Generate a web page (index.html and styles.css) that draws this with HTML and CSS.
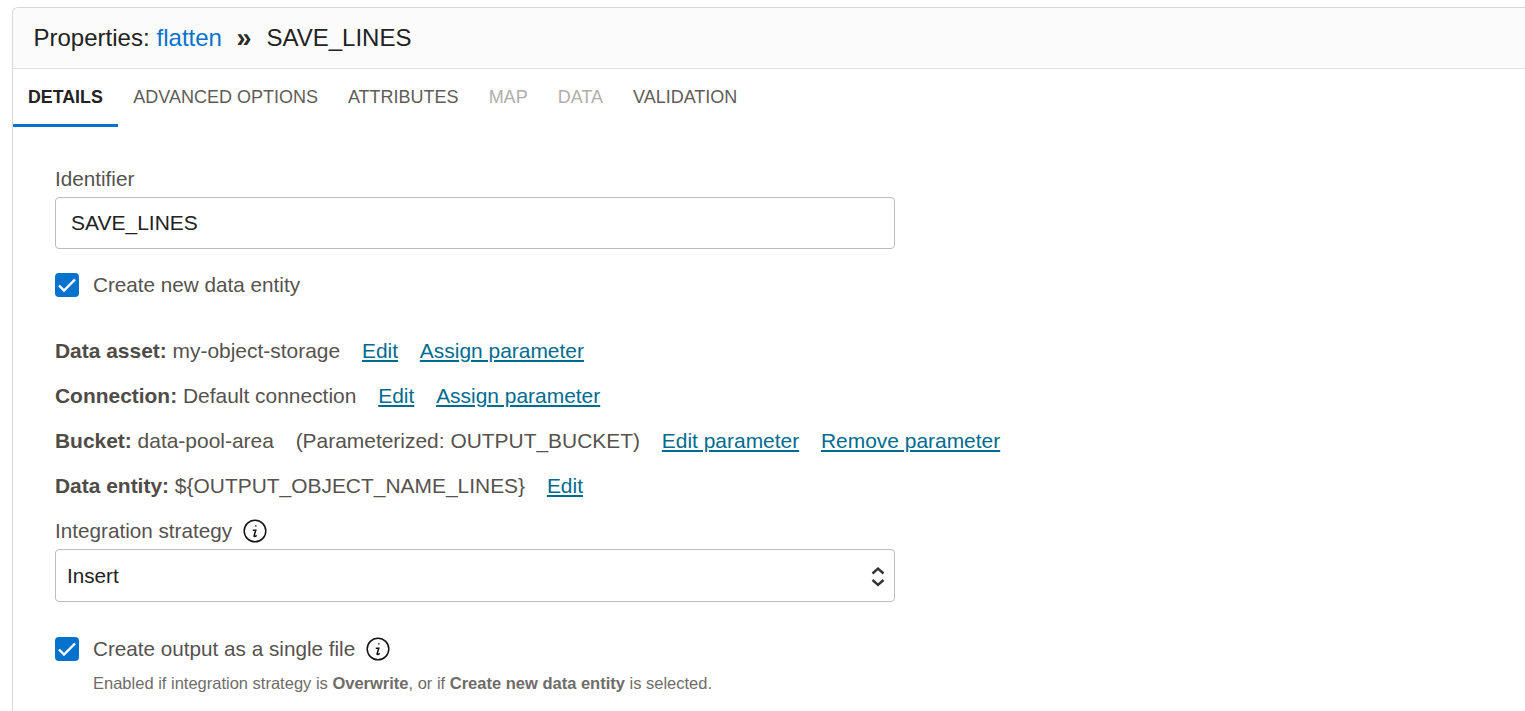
FILE: index.html
```html
<!DOCTYPE html>
<html lang="en">
<head>
    <meta charset="UTF-8">
    <title>Properties: flatten</title>
    <link rel="stylesheet" href="styles.css">
</head>
<body>
    <div class="panel">
        <div class="panel-header">
            <span>Properties:</span>
            <a href="#" class="crumb-link">flatten</a>
            <span class="crumb-sep">&raquo;</span>
            <span>SAVE_LINES</span>
        </div>

        <div class="tabs">
            <a href="#" class="tab active">DETAILS</a>
            <a href="#" class="tab">ADVANCED OPTIONS</a>
            <a href="#" class="tab">ATTRIBUTES</a>
            <a href="#" class="tab disabled">MAP</a>
            <a href="#" class="tab disabled">DATA</a>
            <a href="#" class="tab">VALIDATION</a>
        </div>

        <div class="form">
            <label class="field-label">Identifier</label>
            <input type="text" class="text-input" value="SAVE_LINES">

            <div class="check-row first-check">
                <span class="checkbox">
                    <svg viewBox="0 0 24 24"><path d="M4 12.500l5 5L20 6.500"/></svg>
                </span>
                <span>Create new data entity</span>
            </div>

            <div class="info-row first-info">
                <b>Data asset:</b> my-object-storage
                <a href="#" class="link">Edit</a>
                <a href="#" class="link">Assign parameter</a>
            </div>
            <div class="info-row">
                <b>Connection:</b> Default connection
                <a href="#" class="link">Edit</a>
                <a href="#" class="link">Assign parameter</a>
            </div>
            <div class="info-row">
                <b>Bucket:</b> data-pool-area
                <span class="param-note">(Parameterized: OUTPUT_BUCKET)</span>
                <a href="#" class="link">Edit parameter</a>
                <a href="#" class="link">Remove parameter</a>
            </div>
            <div class="info-row">
                <b>Data entity:</b> ${OUTPUT_OBJECT_NAME_LINES}
                <a href="#" class="link">Edit</a>
            </div>

            <div class="field-label strategy-label">
                <span>Integration strategy</span>
                <svg class="info-icon" viewBox="0 0 24 24">
                    <circle cx="12" cy="12" r="10.800"/>
                    <path d="M12.800 6.200v1.200M9.800 11.200h3l-1.700 5.600c-.2.900.8 1.200 2.600-.4"/>
                </svg>
            </div>
            <div class="select-box">
                <span>Insert</span>
                <svg class="select-arrows" viewBox="0 0 16 24">
                    <path d="M2.500 9.500L8 4.500l5.500 5M2.500 16L8 21l5.500-5"/>
                </svg>
            </div>

            <div class="check-row second-check">
                <span class="checkbox">
                    <svg viewBox="0 0 24 24"><path d="M4 12.500l5 5L20 6.500"/></svg>
                </span>
                <span>Create output as a single file</span>
                <svg class="info-icon" viewBox="0 0 24 24">
                    <circle cx="12" cy="12" r="10.800"/>
                    <path d="M12.800 6.200v1.200M9.800 11.200h3l-1.700 5.600c-.2.900.8 1.200 2.600-.4"/>
                </svg>
            </div>
            <div class="help-text">Enabled if integration strategy is <b>Overwrite</b>, or if <b>Create new data entity</b> is selected.</div>
        </div>
    </div>
</body>
</html>
```

FILE: styles.css
```css
:root {
    --primary-color: #0572ce;
    --link-color: #006b8f;
    --text-color: #161513;
    --label-color: #56524e;
    --border-color: #d8d8d8;
}
html, body {
    height: 100%;
}
body {
    margin: 0;
    overflow: hidden;
    background-color: #fff;
    font-family: 'Liberation Sans', Arial, sans-serif;
    font-size: 20.7px;
    color: var(--label-color);
}
.panel {
    margin: 7px 0 0 12px;
    height: 720px;
    border: 1px solid var(--border-color);
    border-right: none;
    border-radius: 6px 0 0 0;
    box-sizing: border-box;
}
.panel-header {
    display: flex;
    align-items: center;
    height: 60px;
    padding-left: 20.500px;
    background-color: #fbfbfb;
    border-bottom: 1px solid #e0e0e0;
    border-radius: 6px 0 0 0;
    font-size: 24px;
    color: #222;
}
.crumb-link {
    margin-left: 7px;
    color: var(--primary-color);
    text-decoration: none;
}
.crumb-sep {
    margin: 0 15px 0 14.500px;
    font-size: 27px;
    font-weight: bold;
    line-height: 1;
    color: #2a2927;
}
.tabs {
    display: flex;
    height: 58px;
}
.tab {
    padding: 0 15px;
    line-height: 56px;
    font-size: 18px;
    color: #5f5c58;
    text-decoration: none;
}
.tab.active {
    height: 55px;
    padding-right: 15.500px;
    font-weight: bold;
    font-size: 17.800px;
    color: #222;
    border-bottom: 3px solid var(--primary-color);
}
.tab.disabled {
    color: #b0aeac;
}
.form {
    padding: 40px 0 0 42px;
}
.field-label {
    line-height: 24px;
}
.text-input {
    display: block;
    width: 840px;
    height: 52px;
    margin-top: 6px;
    padding: 0 15px;
    box-sizing: border-box;
    border: 1px solid #bdbcbb;
    border-radius: 4px;
    font-family: inherit;
    font-size: 21px;
    color: #222;
}
.check-row {
    display: flex;
    align-items: center;
    height: 24px;
}
.first-check {
    margin-top: 24px;
}
.second-check {
    margin-top: 35px;
}
.checkbox {
    flex: none;
    width: 24px;
    height: 24px;
    margin-right: 14px;
    border-radius: 4px;
    background-color: var(--primary-color);
}
.checkbox svg {
    display: block;
    width: 24px;
    height: 24px;
    fill: none;
    stroke: #fff;
    stroke-width: 2.4;
}
.info-row {
    height: 45px;
    line-height: 45px;
    font-size: 20.950px;
    white-space: nowrap;
}
.first-info {
    margin-top: 31px;
}
.info-row b {
    color: #4f4b47;
}
.link {
    margin-left: 16px;
    color: var(--link-color);
    text-decoration: underline;
}
.param-note {
    margin-left: 16px;
}
.strategy-label {
    display: flex;
    align-items: center;
    margin-top: 11px;
}
.info-icon {
    flex: none;
    width: 24px;
    height: 24px;
    margin-left: 11px;
    fill: none;
    stroke: #161513;
    stroke-width: 1.500;
}
.select-box {
    display: flex;
    align-items: center;
    justify-content: space-between;
    width: 840px;
    height: 53px;
    margin-top: 6px;
    padding: 0 8px 0 11px;
    box-sizing: border-box;
    border: 1px solid #bdbcbb;
    border-radius: 4px;
    color: #222;
}
.select-arrows {
    width: 16px;
    height: 24px;
    fill: none;
    stroke: #333;
    stroke-width: 2.400;
}
.help-text {
    margin: 13px 0 0 38px;
    font-size: 16.500px;
    color: #6f6c69;
}
```
